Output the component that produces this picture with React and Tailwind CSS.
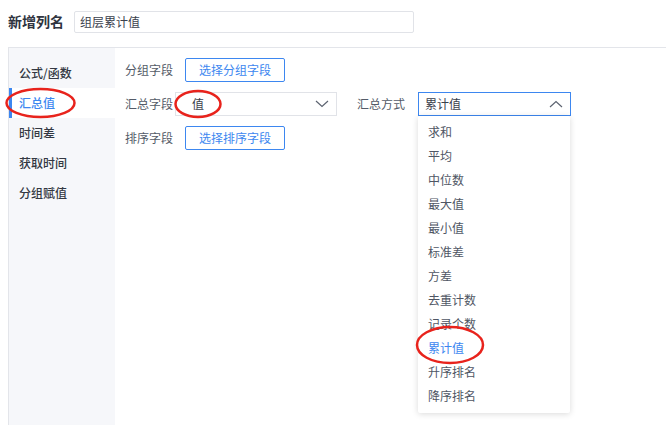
import React from "react";

const font = { fontFamily: '"Noto Sans CJK SC", "Noto Sans", sans-serif' };

function Chevron({ up }) {
  return (
    <svg width="14" height="8" viewBox="0 0 14 8" fill="none" stroke="#5c6370" strokeWidth="1.2">
      {up ? <polyline points="1,7 7,1.5 13,7" /> : <polyline points="1,1 7,6.5 13,1" />}
    </svg>
  );
}

const sideItems = ["公式/函数", "汇总值", "时间差", "获取时间", "分组赋值"];
const options = ["求和", "平均", "中位数", "最大值", "最小值", "标准差", "方差", "去重计数", "记录个数", "累计值", "升序排名", "降序排名"];

export default function App() {
  return (
    <div className="relative w-[666px] h-[425px] overflow-hidden bg-white" style={font}>
      <div className="flex items-center pl-[8px] pt-[11px] h-[32px]">
        <div className="text-[14px] font-bold text-[#2f3440] w-[66px] leading-[21px]">新增列名</div>
        <div className="w-[340px] h-[22px] border border-[#e1e3e8] rounded-[2px] flex items-center pl-[5px] text-[12px] text-[#3a404c]">组层累计值</div>
      </div>
      <div className="ml-[8px] mt-[15px] border-l border-t border-[#e3e5ea] flex h-[380px]">
        <div className="w-[106px] bg-[#f6f7fa] pt-[10px] flex flex-col">
          {sideItems.map((t, i) => (
            <div
              key={t}
              className={
                i === 1
                  ? "h-[30px] flex items-center pl-[7px] text-[12px] font-medium bg-white text-[#3d87f0] border-l-[3px] border-[#3d87f0]"
                  : "h-[30px] flex items-center pl-[10px] text-[12px] font-medium text-[#333842]"
              }
            >
              {t}
            </div>
          ))}
        </div>
        <div className="flex-1 pl-[10px] pt-[10px] flex flex-col gap-[10px] text-[12px]">
          <div className="flex items-center h-[24px]">
            <div className="w-[60px] text-[#545b68]">分组字段</div>
            <div className="w-[100px] h-[24px] border border-[#3d87f0] rounded-[2px] flex items-center justify-center text-[#3d87f0]">选择分组字段</div>
          </div>
          <div className="flex items-center h-[24px]">
            <div className="w-[50px] text-[#545b68]">汇总字段</div>
            <div className="w-[162px] h-[24px] border border-[#e1e3e8] flex items-center justify-between pl-[16px] pr-[7px] text-[#3a404c]">
              <span>值</span>
              <Chevron />
            </div>
            <div className="ml-[20px] w-[61px] text-[#545b68]">汇总方式</div>
            <div className="w-[153px] h-[24px] border border-[#3d87f0] flex items-center justify-between pl-[6px] pr-[7px] text-[#3a404c]">
              <span>累计值</span>
              <Chevron up />
            </div>
          </div>
          <div className="flex items-center h-[24px]">
            <div className="w-[60px] text-[#545b68]">排序字段</div>
            <div className="w-[100px] h-[24px] border border-[#3d87f0] rounded-[2px] flex items-center justify-center text-[#3d87f0]">选择排序字段</div>
          </div>
        </div>
      </div>

      <div className="absolute left-[418px] top-[116px] w-[152px] h-[297px] bg-white rounded-[2px] shadow-[0_1px_6px_rgba(0,0,0,0.15)] pt-[4px] text-[12px]">
        {options.map((o) => (
          <div key={o} className={"h-[24px] flex items-center pl-[10px] " + (o === "累计值" ? "text-[#3d87f0]" : "text-[#4f5664]")}>
            {o}
          </div>
        ))}
      </div>

      <svg className="absolute left-0 top-0 pointer-events-none" width="666" height="425">
        <ellipse cx="40.5" cy="103" rx="34" ry="14" fill="none" stroke="#e8231c" strokeWidth="2.5" />
        <ellipse cx="198" cy="104" rx="22.5" ry="13" fill="none" stroke="#e8231c" strokeWidth="2.5" />
        <ellipse cx="450" cy="345" rx="33" ry="18" fill="none" stroke="#e8231c" strokeWidth="2.5" />
      </svg>
    </div>
  );
}
